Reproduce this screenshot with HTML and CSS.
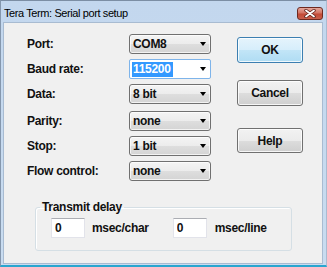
FILE: index.html
```html
<!DOCTYPE html>
<html lang="en">
<head>
    <meta charset="UTF-8">
    <title>Tera Term: Serial port setup</title>
    <link rel="stylesheet" href="styles.css">
</head>
<body>

<div class="window">
    <div class="titlebar">
        <span class="title">Tera Term: Serial port setup</span>
        <span class="close-btn">
            <svg width="12" height="9" viewBox="0 0 12 9">
                <path d="M2 1.5 L10 7.5 M10 1.5 L2 7.5" stroke="#5a2018" stroke-width="3.4" stroke-linecap="round"/>
                <path d="M2 1.5 L10 7.5 M10 1.5 L2 7.5" stroke="#fff" stroke-width="1.8" stroke-linecap="round"/>
            </svg>
        </span>
    </div>

    <div class="client">
        <div class="main">
            <div class="fields">
                <div class="row">
                    <label>Port:</label>
                    <div class="combo"><span>COM8</span><i class="arrow"></i></div>
                </div>
                <div class="row">
                    <label>Baud rate:</label>
                    <div class="combo edit"><span class="sel">115200</span><i class="arrow"></i></div>
                </div>
                <div class="row">
                    <label>Data:</label>
                    <div class="combo"><span>8 bit</span><i class="arrow"></i></div>
                </div>
                <div class="row parity">
                    <label>Parity:</label>
                    <div class="combo"><span>none</span><i class="arrow"></i></div>
                </div>
                <div class="row">
                    <label>Stop:</label>
                    <div class="combo"><span>1 bit</span><i class="arrow"></i></div>
                </div>
                <div class="row">
                    <label>Flow control:</label>
                    <div class="combo"><span>none</span><i class="arrow"></i></div>
                </div>
            </div>

            <div class="buttons">
                <button class="btn default">OK</button>
                <button class="btn cancel">Cancel</button>
                <button class="btn help">Help</button>
            </div>
        </div>

        <fieldset class="delay">
            <legend>Transmit delay</legend>
            <div class="delay-row">
                <input class="num" type="text" value="0">
                <span class="unit">msec/char</span>
                <input class="num second" type="text" value="0">
                <span class="unit">msec/line</span>
            </div>
        </fieldset>
    </div>
</div>

</body>
</html>
```

FILE: styles.css
```css
body {
    margin: 0;
    font-family: "Liberation Sans", Arial, sans-serif;
    overflow: hidden;
}
.window {
    width: 327px;
    height: 267px;
    box-sizing: border-box;
    display: flex;
    flex-direction: column;
    background: linear-gradient(#c3d7ee, #c9dcf0);
    border-top: 1px solid #7c8ea4;
    border-left: 1px solid #8597ad;
    border-right: 1px solid #a9bbd0;
    border-bottom: 2px solid #2aa6cf;
    padding: 0 3px 1px 2px;
}
.titlebar {
    height: 21px;
    display: flex;
    align-items: center;
    justify-content: space-between;
}
.title {
    font-size: 11px;
    letter-spacing: -0.4px;
    color: #000;
    padding-left: 1px;
    margin-top: 2px;
}
.close-btn {
    width: 26px;
    height: 13px;
    box-sizing: border-box;
    border: 1px solid #6e2a20;
    border-radius: 3px;
    background: linear-gradient(#e4a89d, #d37463 45%, #c24a36 55%, #c9604c);
    display: flex;
    align-items: center;
    justify-content: center;
    margin-top: 3px;
}
.client {
    flex: 1;
    background: #f0f0f0;
    border: 1px solid #a8bbd1;
    padding: 11px 0 0 23px;
    font-size: 12px;
    font-weight: bold;
    letter-spacing: -0.3px;
    color: #111;
}
.main {
    display: flex;
}
.fields {
    display: flex;
    flex-direction: column;
    gap: 5px;
}
.row {
    display: flex;
    align-items: center;
}
.row.parity {
    margin-top: 2px;
}
.row label {
    width: 102px;
}
.combo {
    width: 82px;
    height: 20px;
    box-sizing: border-box;
    display: flex;
    align-items: center;
    padding-left: 3px;
    border: 1px solid #707070;
    border-radius: 3px;
    background: linear-gradient(#f4f4f4, #ececec 50%, #dedede 50%, #d4d4d4);
    box-shadow: inset 0 0 0 1px rgba(255, 255, 255, 0.7);
}
.combo.edit {
    background: #fff;
    border: 1px solid #7eb4ea;
    border-radius: 2px;
    box-shadow: none;
    padding-left: 2px;
}
.combo .sel {
    background: #3399ff;
    color: #fff;
    line-height: 15px;
    padding: 0 2px 0 1px;
}
.arrow {
    margin-left: auto;
    margin-right: 4px;
    width: 0;
    height: 0;
    border-left: 3.5px solid transparent;
    border-right: 3.5px solid transparent;
    border-top: 4px solid #000;
}
.buttons {
    display: flex;
    flex-direction: column;
    margin-left: 26px;
    margin-top: 3px;
}
.btn {
    width: 66px;
    height: 26px;
    font-family: inherit;
    font-size: 12px;
    font-weight: bold;
    letter-spacing: -0.3px;
    color: #111;
    border: 1px solid #707070;
    border-radius: 3px;
    background: linear-gradient(#f2f2f2, #ebebeb 50%, #dddddd 50%, #cfcfcf);
    box-shadow: inset 0 0 0 1px rgba(255, 255, 255, 0.8);
    padding: 0;
}
.btn.default {
    border-color: #3c7fb1;
    background: linear-gradient(#e5f4fc, #d6eefb 50%, #c2e5f7 50%, #afdcf3);
}
.btn.cancel {
    margin-top: 17px;
}
.btn.help {
    margin-top: 22px;
    height: 25px;
}
.delay {
    margin: 18px 0 0 8px;
    width: 257px;
    box-sizing: border-box;
    border: 1px solid #d5dfe5;
    border-radius: 3px;
    box-shadow: inset 1px 1px 0 #fff;
    padding: 3px 0 12px 4px;
}
.delay legend {
    padding: 0 2px;
    line-height: 16px;
}
.delay-row {
    display: flex;
    align-items: center;
    margin-left: 11px;
}
.num {
    width: 34px;
    height: 20px;
    box-sizing: border-box;
    border: 1px solid #e2e3ea;
    border-top-color: #abadb3;
    background: #fff;
    font-family: inherit;
    font-size: 12px;
    font-weight: bold;
    color: #111;
    padding: 0 0 0 3px;
    outline: none;
}
.unit {
    margin-left: 7px;
}
.num.second {
    margin-left: 24px;
}
.num.second + .unit {
    margin-left: 8px;
}
```
